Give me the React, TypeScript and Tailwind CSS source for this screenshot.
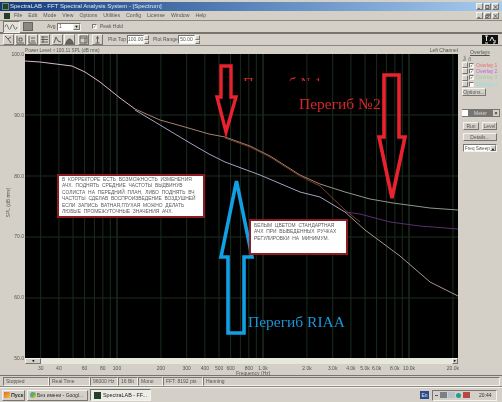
import React from 'react';

const faceClass = 'bg-[#d4d0c8]';
const raised = 'border border-t-[#f4f2ec] border-l-[#f4f2ec] border-b-[#77756f] border-r-[#77756f] bg-[#d4d0c8]';
const sunken = 'border border-t-[#77756f] border-l-[#77756f] border-b-[#f4f2ec] border-r-[#f4f2ec]';

const freqX = (f: number) => 117 + 146 * Math.log10(f / 100);

const gridFreqs = [
  30, 40, 50, 60, 70, 80, 90, 100, 200, 300, 400, 500, 600, 700, 800, 900, 1000, 2000, 3000, 4000, 5000, 6000, 7000,
  8000, 9000, 10000, 20000,
];

const xLabels: [number, string][] = [
  [30, '30'], [40, '40'], [60, '60'], [80, '80'], [100, '100'], [200, '200'], [300, '300'], [400, '400'], [500, '500'],
  [600, '600'], [800, '800'], [1000, '1.0k'], [2000, '2.0k'], [3000, '3.0k'], [4000, '4.0k'], [5000, '5.0k'],
  [6000, '6.0k'], [8000, '8.0k'], [10000, '10.0k'], [20000, '20.0k'],
];

const yLabels = ['100.0', '90.0', '80.0', '70.0', '60.0', '50.0'];

const statusCells: [string, string][] = [
  ['Stopped', 'w-[46px]'],
  ['Real Time', 'w-[41px]'],
  ['96000 Hz', 'w-[28px]'],
  ['16 Bit', 'w-[20px]'],
  ['Mono', 'w-[25px]'],
  ['FFT: 8192 pts', 'w-[40px]'],
  ['Hanning', 'flex-1'],
];

const overlays: [string, string][] = [
  ['Overlay 1', 'text-[#e87070]'],
  ['Overlay 2', 'text-[#c860d8]'],
  ['Overlay 3', 'text-[#a8c8a8]'],
  ['Overlay 4', 'text-[#90e0e0]'],
];

const ToolIcon: React.FC<{ d: string; fill?: boolean; className?: string }> = ({ d, fill, className }) => (
  <div className={`w-[11px] h-[11px] flex items-center justify-center ${raised} ${className ?? ''}`}>
    <svg viewBox="0 0 9 9" className="w-[9px] h-[9px]">
      <path d={d} fill={fill ? '#66665f' : 'none'} stroke="#55554f" strokeWidth="0.9" />
    </svg>
  </div>
);

const Spin: React.FC = () => (
  <div className="flex flex-col w-[5px] h-[9px]">
    <div className={`flex-1 ${raised}`} />
    <div className={`flex-1 ${raised}`} />
  </div>
);

const WinBtn: React.FC<{ d: string }> = ({ d }) => (
  <div className={`w-[7px] h-[7px] flex items-center justify-center ${raised}`}>
    <svg viewBox="0 0 7 7" className="w-[6px] h-[6px]">
      <path d={d} fill="none" stroke="#333" strokeWidth="1" />
    </svg>
  </div>
);

const Callout: React.FC<{ className: string; lines: string[] }> = ({ className, lines }) => (
  <div className={`absolute bg-white border-2 border-[#8c1c20] text-[4.9px] leading-[6.4px] text-[#5a5a5a] [word-spacing:1.4px] ${className}`}>
    {lines.map((l, i) => (
      <div key={i} className="whitespace-nowrap">
        {l}
      </div>
    ))}
  </div>
);

const Plot: React.FC = () => (
  <div className="relative w-[433px] h-[304px] bg-black overflow-hidden">
    <svg viewBox="25 54 433 304" className="absolute inset-0 w-[433px] h-[304px]">
      {gridFreqs.map((f) => (
        <line
          key={f}
          x1={freqX(f)}
          x2={freqX(f)}
          y1="54"
          y2="358"
          stroke={f === 100 || f === 1000 || f === 10000 ? '#28422c' : '#1a2d1e'}
          strokeWidth="1"
        />
      ))}
      {[115, 176, 237, 298].map((y) => (
        <line key={y} x1="25" x2="458" y1={y} y2={y} stroke="#1a2d1e" strokeWidth="1" />
      ))}
      {/* shared start of the curves */}
      <polyline
        points="25,61 40,62 60,64.5 72,66 85,72 100,82 110,90 120,98 135,109"
        fill="none"
        stroke="#d8b8c8"
        strokeWidth="1"
      />
      {/* upper branch */}
      <polyline
        points="135,109 160,120 185,127 209,134 225,137 250,146 270,156 300,175 320,184"
        fill="none"
        stroke="#a88070"
        strokeWidth="1"
      />
      <polyline
        points="320,184 345,192 370,199 393,203 430,208 458,210"
        fill="none"
        stroke="#8a9a88"
        strokeWidth="1"
      />
      <polyline points="225,138 250,147 270,157 300,176 320,186 345,210 360,222" fill="none" stroke="#7a4028" strokeWidth="1" />
      {/* lower branch */}
      <polyline
        points="135,110 160,125 190,143 209,154 225,162 260,175 300,192 320,197 345,212"
        fill="none"
        stroke="#a8a0c0"
        strokeWidth="1"
      />
      <polyline points="345,212 360,214 390,222 420,226 458,229" fill="none" stroke="#5a3070" strokeWidth="1" />
      <polyline points="345,212 365,230 400,256 430,282 458,296" fill="none" stroke="#a89488" strokeWidth="1" />

      {/* hand drawn arrows */}
      <path d="M221 66 H231 V97 H236 L226 132 L217 97 H221 Z" fill="none" stroke="#e8222e" strokeWidth="3.4" />
      <path d="M384 75 H399 V137 H405 L392 198 L379 137 H384 Z" fill="none" stroke="#e8222e" strokeWidth="3.6" />
      <path d="M236.5 181 L252 257 H244 V333 H228 V257 H221 Z" fill="none" stroke="#12a0e4" strokeWidth="3.6" />
    </svg>

    {/* note 1 is half covered in the source picture, only the top of the letters shows */}
    <div className="absolute left-[218px] top-[22px] h-[5px] overflow-hidden">
      <div className="font-['Liberation_Serif',serif] text-[15px] leading-[15px] text-[#d8262c] whitespace-nowrap">Перегиб №1</div>
    </div>
    <div className="absolute left-[274px] top-[41px] font-['Liberation_Serif',serif] text-[15.5px] leading-[17px] text-[#d8262c] whitespace-nowrap">
      Перегиб №2
    </div>
    <div className="absolute left-[223px] top-[258px] font-['Liberation_Serif',serif] text-[15.5px] leading-[19px] text-[#1a96d8] whitespace-nowrap">
      Перегиб RIAA
    </div>

    <Callout
      className="left-[32px] top-[120px] w-[148px] h-[44px] pl-[3px] pt-[1px]"
      lines={[
        'В КОРРЕКТОРЕ ЕСТЬ ВОЗМОЖНОСТЬ ИЗМЕНЕНИЯ',
        'АЧХ. ПОДНЯТЬ СРЕДНИЕ ЧАСТОТЫ ВЫДВИНУВ',
        'СОЛИСТА НА ПЕРЕДНИЙ ПЛАН, ЛИБО ПОДНЯТЬ ВЧ',
        'ЧАСТОТЫ СДЕЛАВ ВОСПРОИЗВЕДЕНИЕ ВОЗДУШНЕЙ',
        'ЕСЛИ ЗАПИСЬ ВАТНАЯ,ГЛУХАЯ МОЖНО ДЕЛАТЬ',
        'ЛЮБЫЕ ПРОМЕЖУТОЧНЫЕ ЗНАЧЕНИЯ АЧХ.',
      ]}
    />
    <Callout
      className="left-[224px] top-[165px] w-[99px] h-[36px] pl-[3px] pt-[2px]"
      lines={['БЕЛЫМ ЦВЕТОМ СТАНДАРТНАЯ', 'АЧХ ПРИ ВЫВЕДЕННЫХ РУЧКАХ', 'РЕГУЛИРОВКИ НА МИНИМУМ.']}
    />
  </div>
);

const App: React.FC = () => {
  return (
    <div className={`w-[502px] h-[402px] overflow-hidden flex flex-col blur-[0.4px] ${faceClass} font-['Liberation_Sans',Arial,sans-serif] text-[#55554f] text-[5px] leading-[7px]`}>
      {/* title bar */}
      <div className="mt-[2px] h-[9px] flex items-center bg-gradient-to-r from-[#123a7c] via-[#5a86bc] to-[#a8ccee] pl-[2px] pr-[3px] gap-[1px]">
        <div className="w-[7px] h-[7px] bg-[#23402a] border border-[#6a8a60]" />
        <span className="flex-1 text-[#e6e8f0] text-[6px] whitespace-nowrap">SpectraLAB - FFT Spectral Analysis System - [Spectrum]</span>
        <WinBtn d="M1 5.5H4" />
        <WinBtn d="M1 1.5H5.5V5.5H1Z" />
        <WinBtn d="M1 1L6 6M6 1L1 6" />
      </div>

      {/* menu */}
      <div className="h-[10px] flex items-center pl-[4px] pr-[3px] gap-[1px] border-b border-[#8a8880]">
        <div className="w-[6px] h-[6px] bg-[#23402a] mr-[3px]" />
        <div className="flex-1 flex gap-[6px] text-[5.2px] whitespace-nowrap">
          {['File', 'Edit', 'Mode', 'View', 'Options', 'Utilities', 'Config', 'License', 'Window', 'Help'].map((m) => (
            <span key={m}>{m}</span>
          ))}
        </div>
        <WinBtn d="M1 5.5H4" />
        <WinBtn d="M2 1H6V4M1 2.5H4.5V5.5H1Z" />
        <WinBtn d="M1 1L6 6M6 1L1 6" />
      </div>

      {/* toolbar 1 */}
      <div className="h-[13px] flex items-center pl-[3px] border-b-2 border-[#77756f]">
        <div className={`w-[17px] h-[12px] flex items-center justify-center ${sunken} bg-[#e4e2dc]`}>
          <svg viewBox="0 0 15 10" className="w-[15px] h-[10px]">
            <path d="M1 5 Q2.5 0 4 5 T7 5 T10 5 T13 5" fill="none" stroke="#66665f" strokeWidth="0.9" />
          </svg>
        </div>
        <div className="w-[14px] h-[12px] ml-[1px] flex items-center justify-center">
          <div className="w-[10px] h-[9px] bg-[#88887f] border border-[#66665f]" />
        </div>
        <span className="ml-[12px] w-[10px]">Avg</span>
        <div className={`w-[24px] h-[8px] bg-white flex items-center justify-between ${sunken}`}>
          <span className="pl-[1px]">1</span>
          <div className={`w-[7px] h-full flex items-center justify-center ${raised} text-[4px] text-black`}>▼</div>
        </div>
        <div className={`ml-[11px] w-[5px] h-[5px] bg-white ${sunken} flex items-center justify-center text-[4px] text-black`}>✓</div>
        <span className="ml-[3px] whitespace-nowrap">Peak Hold</span>
      </div>

      {/* toolbar 2 */}
      <div className="h-[12px] flex items-center pl-[3px] pr-[4px] border-b border-[#8a8880]">
        <ToolIcon d="M1 1L4 4L7 2M4 4L7 8" />
        <ToolIcon className="ml-[1px]" d="M1 8V1M1 8H8M3 6V3H6V6Z" />
        <ToolIcon className="ml-[1px]" d="M1 8V1M1 8H8M3 3H7M3 6H7" />
        <ToolIcon className="ml-[1px]" d="M1 2H8M1 4.5H8M1 7H8M3 1V8" />
        <ToolIcon className="ml-[2px]" d="M1 8L3 2L5 6L8 7" />
        <ToolIcon className="ml-[1px]" fill d="M0.5 8.5Q4.5 -1 8.5 8.5Z" />
        <ToolIcon className="ml-[3px]" d="M1 1H8V8H1ZM1 3H8M6 3V8" />
        <ToolIcon className="ml-[3px]" d="M4.5 1V5M2.5 8H6.5M4.5 5V8M3 3H6" />
        <span className="ml-[5px] w-[19px] whitespace-nowrap">Plot Top</span>
        <div className={`w-[17px] h-[9px] bg-white ${sunken} text-center leading-[7px]`}>100.00</div>
        <Spin />
        <span className="ml-[4px] w-[25px] whitespace-nowrap">Plot Range</span>
        <div className={`w-[17px] h-[9px] bg-white ${sunken} text-center leading-[7px]`}>50.00</div>
        <Spin />
        <div className="ml-auto w-[16px] h-[9px] bg-[#101010] flex items-center justify-center">
          <svg viewBox="0 0 16 9" className="w-[16px] h-[9px]">
            <path d="M3 1H6M4.5 1V6M3 8H6M8 6L10 2L12 6M13 5V8H11" fill="none" stroke="#e8e8e8" strokeWidth="1" />
          </svg>
        </div>
      </div>

      {/* power level line */}
      <div className="h-[8px] flex pl-[25px] pr-[44px] items-center justify-between text-[4.7px]">
        <span className="whitespace-nowrap">Power Level: r 100.11 SPL (dB rms)</span>
        <span className="whitespace-nowrap text-[5px]">Left Channel</span>
      </div>

      {/* chart and right panel */}
      <div className="flex">
        <div className="relative w-[25px] h-[304px]">
          <div className="h-[310px] -mt-[3px] flex flex-col justify-between items-end pr-[1px] leading-[6px]">
            {yLabels.map((y) => (
              <span key={y}>{y}</span>
            ))}
          </div>
          <div className="absolute left-[-12px] top-[145px] w-[40px] text-center -rotate-90 whitespace-nowrap">SPL (dB rms)</div>
        </div>

        <Plot />

        <div className="w-[44px] pl-[4px] pr-[3px] flex flex-col">
          <div className="h-[6px] -mt-[5px] pl-[8px] underline leading-[6px] whitespace-nowrap">Overlays</div>
          <div className="h-[6px] flex gap-[1px] pl-[1px] text-[3.5px] leading-[4px]">
            <span className="[writing-mode:vertical-rl] rotate-180">Set</span>
            <span className="[writing-mode:vertical-rl] rotate-180">Clr</span>
          </div>
          <div className="mt-[1px] flex flex-col gap-[0.4px]">
            {overlays.map(([name, color], i) => (
              <div key={name} className="h-[6px] flex items-center gap-[1px] whitespace-nowrap">
                <div className={`w-[6px] h-[6px] ${raised}`} />
                <div className={`w-[5px] h-[5px] bg-white ${sunken} flex items-center justify-center text-[4px] text-black`}>{i < 3 ? '✓' : ''}</div>
                <span className={`${color} ml-[1px]`}>{name}</span>
              </div>
            ))}
          </div>
          <div className={`mt-[1px] w-[24px] h-[8px] ${raised} text-center leading-[6px]`}>Options...</div>

          <div className="mt-[13px] h-[8px] bg-[#77756f] -mr-[1px] flex items-center justify-between pr-[1px] text-[#d8d8d8]">
            <div className="w-[6px] h-[6px] bg-white" />
            <span className="text-[5px]">Meter</span>
            <div className="w-[6px] h-[6px] bg-[#d4d0c8] text-black text-[6px] leading-[6px] text-center">×</div>
          </div>
          <div className="mt-[5px] flex gap-[3px] pl-[1px]">
            <div className={`w-[16px] h-[8px] ${raised} text-center leading-[6px]`}>Run</div>
            <div className={`w-[15px] h-[8px] ${raised} text-center leading-[6px]`}>Level</div>
          </div>
          <div className={`mt-[3px] ml-[1px] w-[34px] h-[8px] ${raised} text-center leading-[6px]`}>Details...</div>
          <div className={`mt-[3px] ml-[1px] w-[34px] h-[8px] bg-white flex items-center justify-between ${sunken} whitespace-nowrap overflow-hidden`}>
            <span className="pl-[1px] text-[4.6px]">Freq Sweep</span>
            <div className={`w-[6px] h-full shrink-0 ${raised} text-[4px] text-black text-center`}>▼</div>
          </div>
        </div>
      </div>

      {/* frequency axis */}
      <div className="relative h-[18px] border-b border-[#77756f]">
        <div className="ml-[25px] w-[433px] h-[6px] bg-[#e6e8de] flex justify-between">
          <div className={`w-[16px] h-[6px] ${raised} text-[4px] leading-[4px] text-center text-black`}>◄</div>
          <div className={`w-[6px] h-[6px] ${raised} text-[4px] leading-[4px] text-center text-black`}>►</div>
        </div>
        {xLabels.map(([f, label]) => (
          <span
            key={f}
            className="absolute top-[8px] -translate-x-1/2 whitespace-nowrap leading-[5px]"
            style={{ left: freqX(f) }}
          >
            {label}
          </span>
        ))}
        <span className="absolute left-[236px] top-[13px] whitespace-nowrap leading-[4px]">Frequency (Hz)</span>
      </div>

      {/* status bar */}
      <div className="h-[11px] flex items-center pl-[3px] pr-[2px] pt-[1px] border-b border-[#8a8880]">
        {statusCells.map(([label, w]) => (
          <div key={label} className={`h-[9px] pl-[2px] ${w} ${sunken} whitespace-nowrap overflow-hidden`}>
            {label}
          </div>
        ))}
      </div>

      {/* taskbar */}
      <div className="flex-1 flex items-center pl-[2px] pr-[5px] border-t border-[#f4f2ec] text-[#333]">
        <div className={`w-[23px] h-[11px] flex items-center gap-[1px] pl-[1px] ${raised} font-bold text-[5.4px]`}>
          <div className="w-[6px] h-[6px] shrink-0 bg-gradient-to-br from-[#e0682c] to-[#f0c040]" />
          Пуск
        </div>
        <div className={`ml-[2px] w-[61px] h-[11px] flex items-center gap-[1px] pl-[2px] ${raised} whitespace-nowrap overflow-hidden`}>
          <div className="w-[6px] h-[6px] rounded-full bg-gradient-to-br from-[#4a90d8] via-[#60b050] to-[#e8c040] shrink-0" />
          Без имени - Googl...
        </div>
        <div className={`ml-[2px] w-[61px] h-[12px] flex items-center gap-[2px] pl-[3px] ${sunken} bg-[#ecebe6] whitespace-nowrap overflow-hidden text-[5.4px] text-[#222]`}>
          <div className="w-[7px] h-[7px] bg-[#23402a] shrink-0" />
          SpectraLAB - FF...
        </div>
        <div className="ml-auto w-[9px] h-[8px] bg-[#2a4a8c] text-[#e0e8f8] leading-[8px] text-center">En</div>
        <div className={`ml-[3px] h-[11px] w-[65px] flex items-center gap-[1px] pl-[2px] ${sunken}`}>
          <div className="w-[3px] h-[1px] bg-[#555]" />
          <div className="ml-[1px] w-[7px] h-[6px] bg-[#7a8088]" />
          <div className="w-[7px] h-[6px] bg-[#b8c0c8]" />
          <div className="w-[5px] h-[5px] rounded-full bg-[#20a090]" />
          <div className="ml-[1px] w-[7px] h-[6px] bg-[#b84848]" />
          <span className="ml-[8px] whitespace-nowrap">20:44</span>
        </div>
      </div>
    </div>
  );
};

export default App;
